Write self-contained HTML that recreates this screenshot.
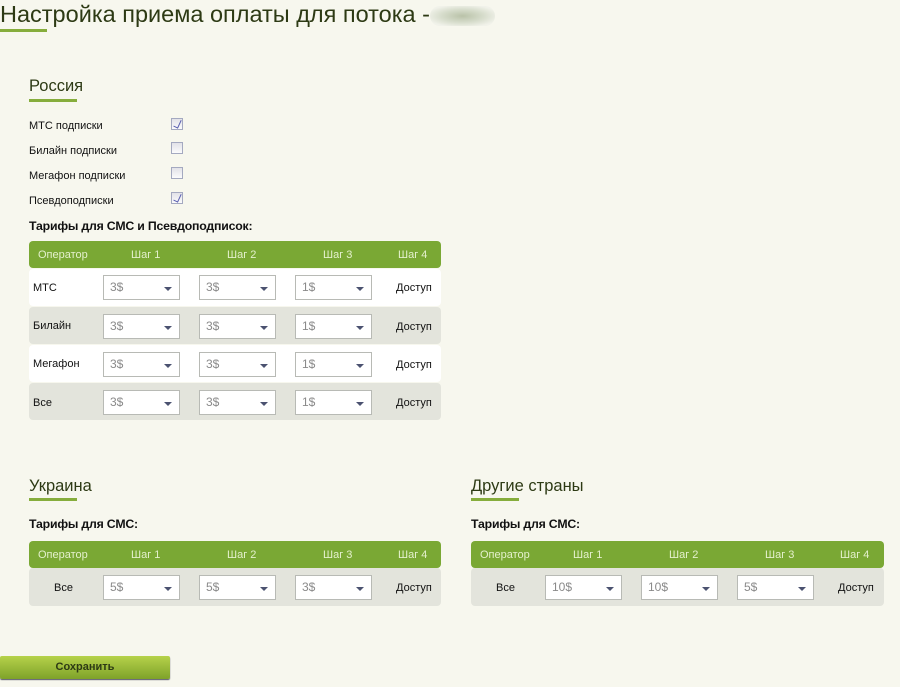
<!DOCTYPE html>
<html><head><meta charset="utf-8"><style>
*{margin:0;padding:0;box-sizing:border-box}
body{width:900px;height:687px;background:#f7f7ee;font-family:"Liberation Sans","DejaVu Sans",sans-serif;color:#111;position:relative;overflow:hidden;font-size:11px}
.a{position:absolute}
.h1{left:0;top:1px;font-size:23.5px;color:#2d3a14;white-space:nowrap}
.ul{height:3px;background:#86ad3c}
.h2{font-size:16.5px;color:#2d3a14}
.lbl{font-size:11px;color:#111}
.cb{width:12px;height:12px;border:1px solid #a4a9c0;background:linear-gradient(#e2e2e8,#fbfbfc);}
.cb.c::after{content:"";position:absolute;left:3px;top:0px;width:4px;height:8px;border:solid #5a5fb0;border-width:0 1.5px 1.5px 0;transform:rotate(25deg)}
.b{font-weight:bold;font-size:12.3px;letter-spacing:-0.2px}
.hd{background:#7aa834;border-radius:4px;height:27px;color:#e4f0cc;font-size:11px}
.hd span{position:absolute;top:8px}
.row{height:37px;border-radius:4px}
.w{background:#fff}.g{background:#e3e4dc}
.sel{width:77px;height:25px;border:1px solid #b8bab5;background:#fff;color:#8a8a8a;font-size:12px;padding:4px 0 0 6px}
.sel::after{content:"";position:absolute;right:7px;top:11px;border-left:4px solid transparent;border-right:4px solid transparent;border-top:4px solid #4b5270}
.btn{left:0;top:656px;width:170px;height:23px;background:linear-gradient(#b6d24a,#7ea22a);border-radius:2px;box-shadow:0 1px 1px #556;font-weight:bold;color:#2d3a14;text-align:center;line-height:23px;font-size:11px}
</style></head><body>
<div class="a h1">Настройка приема оплаты для потока -</div>
<div class="a" style="left:430px;top:6px;width:65px;height:20px;background:radial-gradient(ellipse at center,#b9c2a8 0,#d6dccb 45%,#f1f2ea 80%);border-radius:10px"></div>
<div class="a ul" style="left:0;top:29px;width:47px"></div>

<div class="a h2" style="left:29px;top:77px">Россия</div>
<div class="a ul" style="left:29px;top:99px;width:48px"></div>

<div class="a lbl" style="left:29px;top:120px">МТС подписки</div>
<div class="a lbl" style="left:29px;top:145px">Билайн подписки</div>
<div class="a lbl" style="left:29px;top:170px">Мегафон подписки</div>
<div class="a lbl" style="left:29px;top:195px">Псевдоподписки</div>
<div class="a cb c" style="left:171px;top:118px"></div>
<div class="a cb" style="left:171px;top:142px"></div>
<div class="a cb" style="left:171px;top:167px"></div>
<div class="a cb c" style="left:171px;top:192px"></div>

<div class="a b" style="left:29px;top:219px">Тарифы для СМС и Псевдоподписок:</div>
<div class="a hd" style="left:29px;top:241px;width:412px"><span style="left:9px">Оператор</span><span style="left:102px">Шаг 1</span><span style="left:198px">Шаг 2</span><span style="left:294px">Шаг 3</span><span style="left:369px">Шаг 4</span></div>

<div class="a row w" style="left:29px;top:269px;width:412px"></div>
<div class="a row g" style="left:29px;top:307px;width:412px"></div>
<div class="a row w" style="left:29px;top:345px;width:412px"></div>
<div class="a row g" style="left:29px;top:383px;width:412px"></div>

<div class="a lbl" style="left:33px;top:282px">МТС</div>
<div class="a lbl" style="left:33px;top:320px">Билайн</div>
<div class="a lbl" style="left:33px;top:358px">Мегафон</div>
<div class="a lbl" style="left:33px;top:397px">Все</div>

<div class="a sel" style="left:103px;top:275px">3$</div><div class="a sel" style="left:199px;top:275px">3$</div><div class="a sel" style="left:295px;top:275px">1$</div><div class="a lbl" style="left:396px;top:282px">Доступ</div>
<div class="a sel" style="left:103px;top:314px">3$</div><div class="a sel" style="left:199px;top:314px">3$</div><div class="a sel" style="left:295px;top:314px">1$</div><div class="a lbl" style="left:396px;top:321px">Доступ</div>
<div class="a sel" style="left:103px;top:352px">3$</div><div class="a sel" style="left:199px;top:352px">3$</div><div class="a sel" style="left:295px;top:352px">1$</div><div class="a lbl" style="left:396px;top:359px">Доступ</div>
<div class="a sel" style="left:103px;top:390px">3$</div><div class="a sel" style="left:199px;top:390px">3$</div><div class="a sel" style="left:295px;top:390px">1$</div><div class="a lbl" style="left:396px;top:397px">Доступ</div>

<div class="a h2" style="left:29px;top:477px">Украина</div>
<div class="a ul" style="left:29px;top:498px;width:48px"></div>
<div class="a b" style="left:29px;top:517px">Тарифы для СМС:</div>
<div class="a hd" style="left:29px;top:541px;width:412px"><span style="left:9px">Оператор</span><span style="left:102px">Шаг 1</span><span style="left:198px">Шаг 2</span><span style="left:294px">Шаг 3</span><span style="left:369px">Шаг 4</span></div>
<div class="a row g" style="left:29px;top:568px;width:412px;height:38px"></div>
<div class="a lbl" style="left:54px;top:582px">Все</div>
<div class="a sel" style="left:103px;top:575px">5$</div><div class="a sel" style="left:199px;top:575px">5$</div><div class="a sel" style="left:295px;top:575px">3$</div><div class="a lbl" style="left:396px;top:582px">Доступ</div>

<div class="a h2" style="left:471px;top:477px">Другие страны</div>
<div class="a ul" style="left:471px;top:498px;width:48px"></div>
<div class="a b" style="left:471px;top:517px">Тарифы для СМС:</div>
<div class="a hd" style="left:471px;top:541px;width:413px"><span style="left:9px">Оператор</span><span style="left:102px">Шаг 1</span><span style="left:198px">Шаг 2</span><span style="left:294px">Шаг 3</span><span style="left:369px">Шаг 4</span></div>
<div class="a row g" style="left:471px;top:568px;width:413px;height:38px"></div>
<div class="a lbl" style="left:496px;top:582px">Все</div>
<div class="a sel" style="left:545px;top:575px">10$</div><div class="a sel" style="left:641px;top:575px">10$</div><div class="a sel" style="left:737px;top:575px">5$</div><div class="a lbl" style="left:838px;top:582px">Доступ</div>

<div class="a btn">Сохранить</div>
</body></html>
